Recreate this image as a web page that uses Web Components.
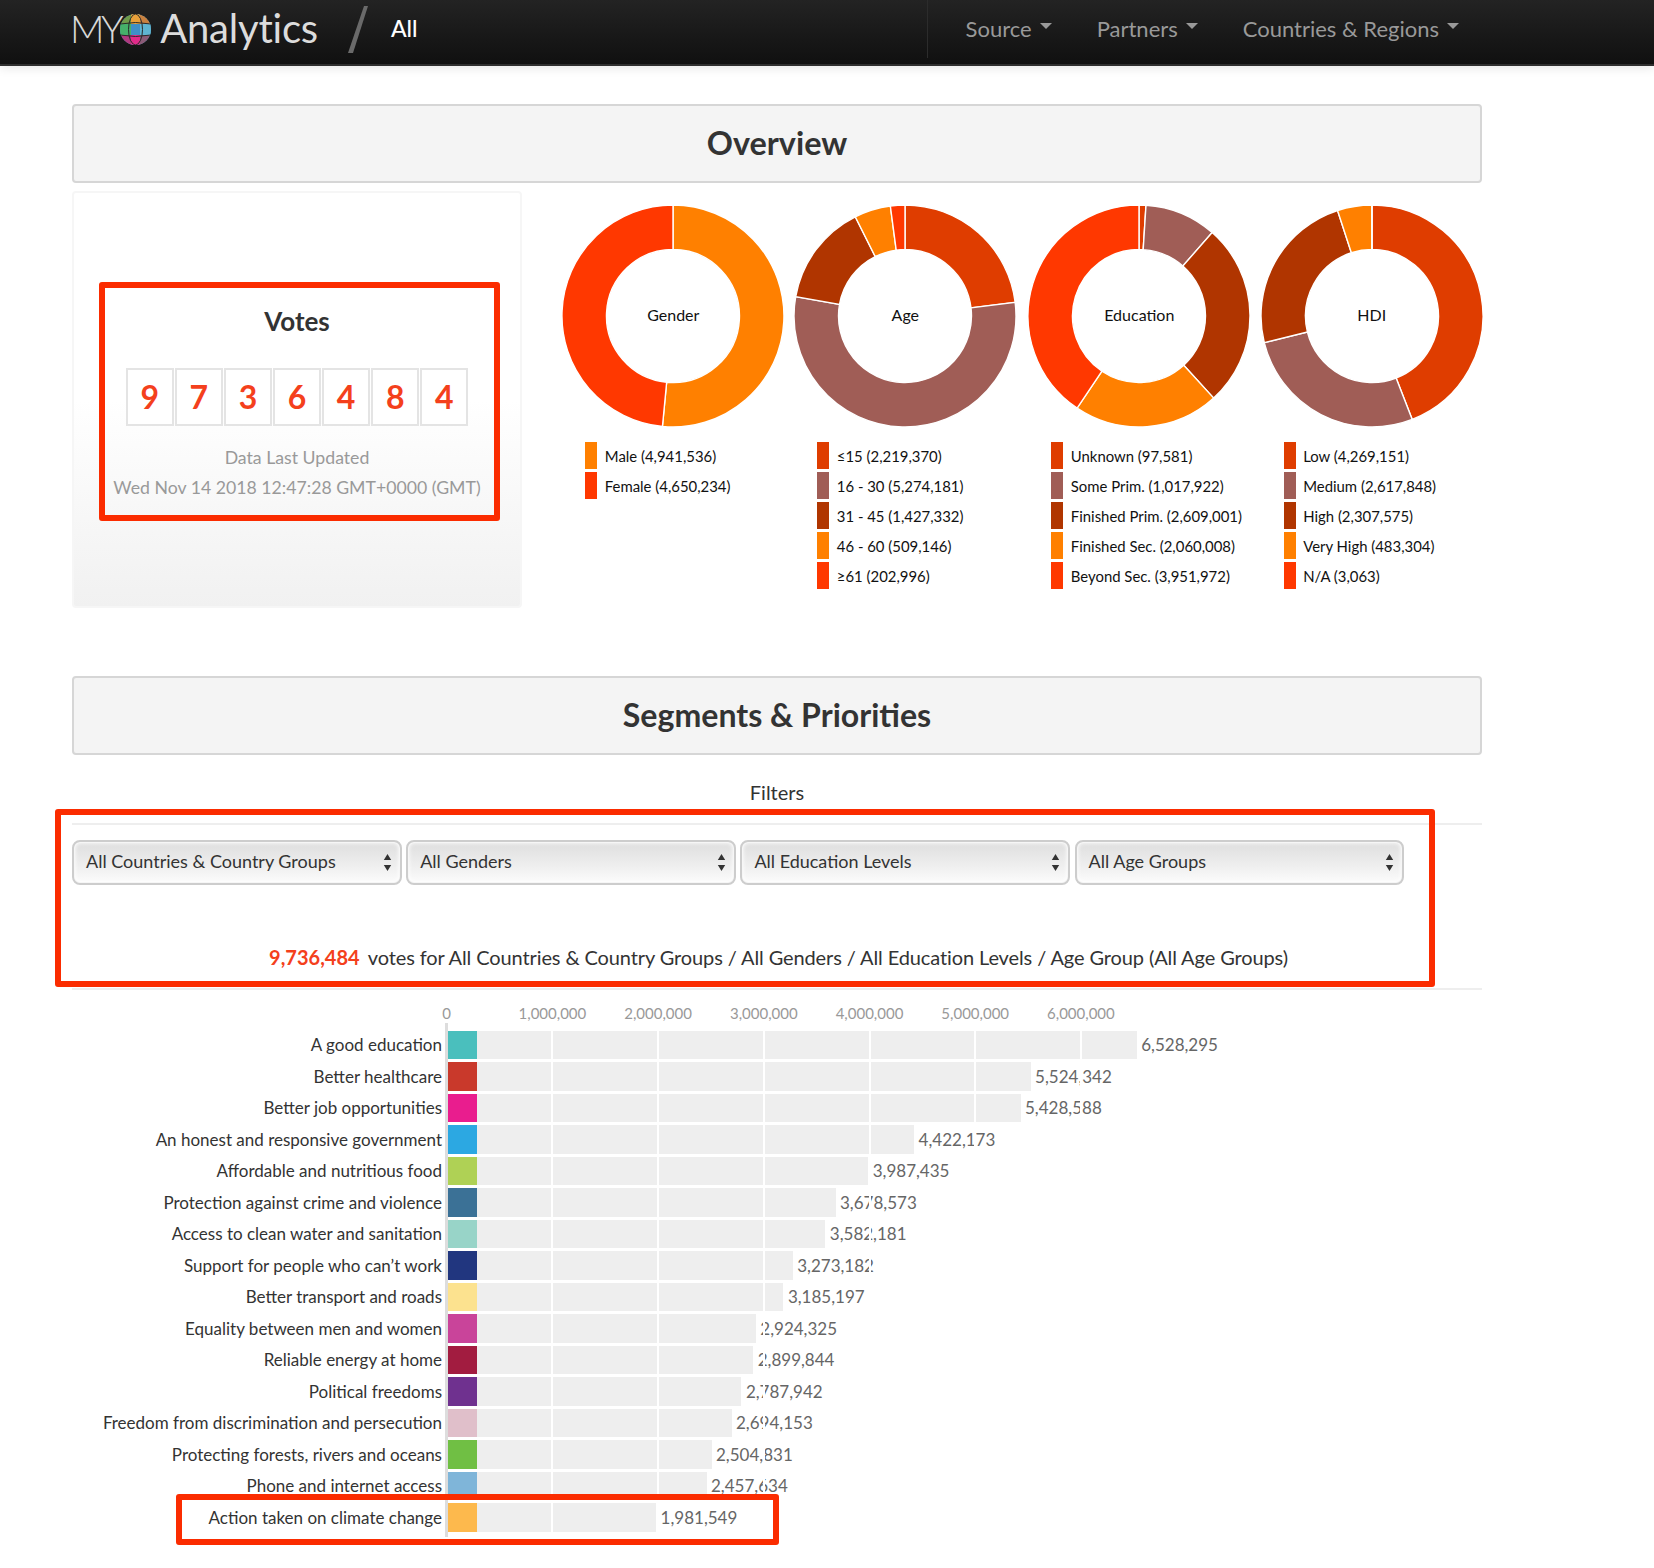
<!DOCTYPE html>
<html>
<head>
<meta charset="utf-8">
<title>MY World Analytics</title>
<style>
  html, body { margin: 0; padding: 0; background: #fff; }
  body { font-family: 'Lato', 'Liberation Sans', sans-serif; color: #333; }
  main { display: block; width: 1410px; margin-left: 72px; padding: 38px 0 30px; }
</style>
</head>
<body>
<top-nav title-text="All">
  <nav-item>Source</nav-item>
  <nav-item>Partners</nav-item>
  <nav-item>Countries &amp; Regions</nav-item>
</top-nav>
<main>
  <section-heading>Overview</section-heading>
  <overview-row>
    <votes-card digits="9736484" updated="Wed Nov 14 2018 12:47:28 GMT+0000 (GMT)">
      <red-frame style="left:25px;top:89px;width:401px;height:239px"></red-frame>
    </votes-card>
    <donut-chart label="Gender" values="4941536,4650234" colors="#ff8000,#ff3800">
      <legend-item color="#ff8000">Male (4,941,536)</legend-item>
      <legend-item color="#ff3800">Female (4,650,234)</legend-item>
    </donut-chart>
    <donut-chart label="Age" values="2219370,5274181,1427332,509146,202996">
      <legend-item color="#df3d00">≤15 (2,219,370)</legend-item>
      <legend-item color="#a05d56">16 - 30 (5,274,181)</legend-item>
      <legend-item color="#b03500">31 - 45 (1,427,332)</legend-item>
      <legend-item color="#ff8000">46 - 60 (509,146)</legend-item>
      <legend-item color="#ff3800">≥61 (202,996)</legend-item>
    </donut-chart>
    <donut-chart label="Education" values="97581,1017922,2609001,2060008,3951972">
      <legend-item color="#df3d00">Unknown (97,581)</legend-item>
      <legend-item color="#a05d56">Some Prim. (1,017,922)</legend-item>
      <legend-item color="#b03500">Finished Prim. (2,609,001)</legend-item>
      <legend-item color="#ff8000">Finished Sec. (2,060,008)</legend-item>
      <legend-item color="#ff3800">Beyond Sec. (3,951,972)</legend-item>
    </donut-chart>
    <donut-chart label="HDI" values="4269151,2617848,2307575,483304,3063">
      <legend-item color="#df3d00">Low (4,269,151)</legend-item>
      <legend-item color="#a05d56">Medium (2,617,848)</legend-item>
      <legend-item color="#b03500">High (2,307,575)</legend-item>
      <legend-item color="#ff8000">Very High (483,304)</legend-item>
      <legend-item color="#ff3800">N/A (3,063)</legend-item>
    </donut-chart>
  </overview-row>
  <section-heading style="margin-top:68px;font-size:32.1px">Segments &amp; Priorities</section-heading>
  <filter-panel total="9,736,484" summary="votes for All Countries &amp; Country Groups / All Genders / All Education Levels / Age Group (All Age Groups)">
    <filter-select>All Countries &amp; Country Groups</filter-select>
    <filter-select>All Genders</filter-select>
    <filter-select>All Education Levels</filter-select>
    <filter-select>All Age Groups</filter-select>
    <red-frame slot="frame" style="left:-17px;top:54px;width:1380px;height:178px"></red-frame>
  </filter-panel>
  <priority-chart>
    <priority-row value="6528295" color="#4abfbd">A good education</priority-row>
    <priority-row value="5524342" color="#c9392b">Better healthcare</priority-row>
    <priority-row value="5428588" color="#e91d8e">Better job opportunities</priority-row>
    <priority-row value="4422173" color="#2ca8e2">An honest and responsive government</priority-row>
    <priority-row value="3987435" color="#afd155">Affordable and nutritious food</priority-row>
    <priority-row value="3678573" color="#3b7196">Protection against crime and violence</priority-row>
    <priority-row value="3582181" color="#98d4c8">Access to clean water and sanitation</priority-row>
    <priority-row value="3273182" color="#21367f">Support for people who can’t work</priority-row>
    <priority-row value="3185197" color="#fce28f">Better transport and roads</priority-row>
    <priority-row value="2924325" color="#c9449a">Equality between men and women</priority-row>
    <priority-row value="2899844" color="#a21c40">Reliable energy at home</priority-row>
    <priority-row value="2787942" color="#6f318f">Political freedoms</priority-row>
    <priority-row value="2694153" color="#e0bfca">Freedom from discrimination and persecution</priority-row>
    <priority-row value="2504831" color="#70bf44">Protecting forests, rivers and oceans</priority-row>
    <priority-row value="2457634" color="#7fb5d9">Phone and internet access</priority-row>
    <priority-row value="1981549" color="#fdb94d">Action taken on climate change</priority-row>
    <red-frame slot="frame" style="left:104px;top:490px;width:603px;height:51px"></red-frame>
  </priority-chart>
</main>

<script>
const PX_PER_VOTE = 105.7 / 1000000;

class TopNav extends HTMLElement {
  constructor() {
    super();
    this.attachShadow({ mode: 'open' });
    this.shadowRoot.innerHTML = `
      <style>
        :host { display: flex; align-items: center; height: 64px; box-sizing: content-box;
          padding-left: 71px; color: #fff;
          background: linear-gradient(#232323, #101010); border-bottom: 2px solid #2e2e2e;
          box-shadow: 0 2px 10px rgba(0,0,0,.1); position: relative; }
        .my { font-size: 38px; font-weight: 300; color: #d8d8d8; letter-spacing: -3.5px; margin: -8px 0 0 -1px; }
        svg.globe { width: 31px; height: 31px; margin: -6px 9px 0 0; flex: none; }
        .brand { font-size: 40px; font-weight: 400; color: #dcdcdc; letter-spacing: -.2px; margin-top: -8px; }
        svg.slash { width: 20px; height: 48px; margin: -5px 22px 0 30px; flex: none; }
        .all { font-size: 23px; font-weight: 500; color: #fff; margin: -9px 0 0 1px; }
        .links { margin-left: auto; height: 58px; align-self: flex-start; display: flex; align-items: center;
          gap: 45px; padding: 0 195px 0 38px; border-left: 1px solid #2c2c2c; }
      </style>
      <span class="my">MY</span>
      <svg class="globe" viewBox="0 0 31 31">
        <defs><clipPath id="ball"><circle cx="15.5" cy="15.5" r="15.5"/></clipPath></defs>
        <g clip-path="url(#ball)">
          <rect width="31" height="31" fill="#4f9fc4"/>
          <rect x="0" y="0" width="11" height="10" fill="#6f9a4a"/>
          <rect x="11" y="0" width="9" height="10" fill="#e8a03a"/>
          <rect x="20" y="0" width="11" height="10" fill="#c9813f"/>
          <rect x="0" y="10" width="11" height="11" fill="#46b06a"/>
          <rect x="11" y="10" width="9" height="11" fill="#3f8fc8"/>
          <rect x="20" y="10" width="11" height="11" fill="#5fb4d0"/>
          <rect x="0" y="21" width="11" height="10" fill="#b0397f"/>
          <rect x="11" y="21" width="9" height="10" fill="#e22a8a"/>
          <rect x="20" y="21" width="11" height="10" fill="#8b5a76"/>
          <g fill="none" stroke="#2a2a2a" stroke-width="1">
            <ellipse cx="15.5" cy="15.5" rx="7" ry="15.5"/>
            <path d="M0 10 Q15.5 7 31 10M0 21 Q15.5 24 31 21"/>
          </g>
        </g>
      </svg>
      <span class="brand">Analytics</span>
      <svg class="slash" viewBox="0 0 20 48"><path d="M16 0 L20 0 L5 47 L0 47 Z" fill="#6a6a6a"/></svg>
      <span class="all"></span>
      <div class="links"><slot></slot></div>`;
    this.shadowRoot.querySelector('.all').textContent = this.getAttribute('title-text');
  }
}

class NavItem extends HTMLElement {
  constructor() {
    super();
    this.attachShadow({ mode: 'open' });
    this.shadowRoot.innerHTML = `
      <style>
        :host { display: inline-flex; align-items: center; font-size: 22px; color: #999; white-space: nowrap; padding-bottom: 2px; }
        i { display: block; width: 0; height: 0; margin: 0 0 4px 8px; border: 6px solid transparent;
          border-top-color: #999; border-bottom: 0; }
      </style><slot></slot><i></i>`;
  }
}

class SectionHeading extends HTMLElement {
  constructor() {
    super();
    this.attachShadow({ mode: 'open' });
    this.shadowRoot.innerHTML = `
      <style>
        :host { display: flex; align-items: center; justify-content: center; height: 79px; box-sizing: border-box;
          background: #f4f4f4; border: 2px solid #d6d6d6; border-radius: 4px; padding-bottom: 2px;
          font-size: 32.4px; font-weight: 700; color: #333; }
      </style><slot></slot>`;
  }
}

class OverviewRow extends HTMLElement {
  constructor() {
    super();
    this.attachShadow({ mode: 'open' });
    this.shadowRoot.innerHTML = `
      <style>
        :host { display: grid; grid-template-columns: 485.3px 232px 234px 232.4px 232px; margin-top: 8px; height: 417px; }
        ::slotted(votes-card) { width: 450px; }
        ::slotted(donut-chart) { width: 232px; }
      </style><slot></slot>`;
  }
}

class VotesCard extends HTMLElement {
  constructor() {
    super();
    this.attachShadow({ mode: 'open' });
    this.shadowRoot.innerHTML = `
      <style>
        :host { display: block; position: relative; box-sizing: border-box; height: 417px; padding-top: 110px;
          border: 2px solid #f6f6f6; border-radius: 4px; text-align: center;
          background: linear-gradient(#fff 50%, #f1f1f1); }
        h3 { margin: 0; font-size: 26px; line-height: 36px; font-weight: 700; color: #333; }
        .digits { display: flex; justify-content: center; gap: 1.1px; margin: 29px 0 17px; }
        .digits span { width: 48px; height: 58px; box-sizing: border-box; border: 2px solid #e4e4e4; background: #fff;
          font-size: 32px; font-weight: 700; line-height: 54px; color: #f4401c; }
        p { margin: 0; font-size: 17.7px; line-height: 29.5px; color: #999; white-space: nowrap; }
      </style>
      <h3>Votes</h3>
      <div class="digits"></div>
      <p>Data Last Updated</p>
      <p class="when"></p>
      <slot></slot>`;
    const box = this.shadowRoot.querySelector('.digits');
    for (const d of this.getAttribute('digits')) {
      const s = document.createElement('span');
      s.textContent = d;
      box.appendChild(s);
    }
    this.shadowRoot.querySelector('.when').textContent = this.getAttribute('updated');
  }
}

class DonutChart extends HTMLElement {
  constructor() {
    super();
    this.attachShadow({ mode: 'open' });
    const palette = ['#df3d00', '#a05d56', '#b03500', '#ff8000', '#ff3800'];
    const colors = (this.getAttribute('colors') || palette.join(',')).split(',');
    const values = this.getAttribute('values').split(',').map(Number);
    const total = values.reduce((a, b) => a + b, 0);
    const R = 111, r = 66.5, c = 112;
    let angle = 0, paths = '';
    const pt = (rad, a) => (c + rad * Math.sin(a)).toFixed(2) + ' ' + (c - rad * Math.cos(a)).toFixed(2);
    values.forEach((v, i) => {
      const next = angle + v / total * Math.PI * 2;
      const big = next - angle > Math.PI ? 1 : 0;
      paths += `<path fill="${colors[i]}" stroke="#fff" stroke-width="1.4" d="M${pt(R, angle)} A${R} ${R} 0 ${big} 1 ${pt(R, next)} L${pt(r, next)} A${r} ${r} 0 ${big} 0 ${pt(r, angle)} Z"/>`;
      angle = next;
    });
    this.shadowRoot.innerHTML = `
      <style>
        :host { display: block; padding-top: 13px; }
        .ring { position: relative; width: 224px; height: 224px; margin: 0 auto; }
        svg { display: block; width: 224px; height: 224px; }
        .name { position: absolute; inset: 0; display: flex; align-items: center; justify-content: center;
          font-size: 16px; color: #111; padding-bottom: 3px; box-sizing: border-box; }
        .legend { display: flex; flex-direction: column; gap: 3px; margin: 14px 0 0 28px; }
      </style>
      <div class="ring">
        <svg viewBox="0 0 224 224">${paths}</svg>
        <div class="name">${this.getAttribute('label')}</div>
      </div>
      <div class="legend"><slot></slot></div>`;
  }
}

class LegendItem extends HTMLElement {
  constructor() {
    super();
    this.attachShadow({ mode: 'open' });
    this.shadowRoot.innerHTML = `
      <style>
        :host { display: flex; align-items: center; gap: 7.5px; height: 27px; font-size: 14.9px; color: #111; white-space: nowrap; }
        i { display: block; width: 12px; height: 27px; background: ${this.getAttribute('color')}; flex: none; }
      </style><i></i><span><slot></slot></span>`;
  }
}

class FilterPanel extends HTMLElement {
  constructor() {
    super();
    this.attachShadow({ mode: 'open' });
    this.shadowRoot.innerHTML = `
      <style>
        :host { display: block; position: relative; padding-top: 23px; }
        .label { text-align: center; font-size: 20px; line-height: 28px; color: #333; }
        hr { border: 0; height: 2px; background: #eee; margin: 0; }
        .selects { display: flex; gap: 4.6px; margin: 15px 0 57px; }
        .summary { text-align: center; font-size: 20px; line-height: 30px; color: #333; white-space: nowrap; padding-left: 3px; }
        .summary b { color: #f4401c; margin-right: 3px; }
        .summary span { letter-spacing: -.11px; }
      </style>
      <div class="label">Filters</div>
      <hr style="margin-top:17px">
      <div class="selects"><slot></slot></div>
      <div class="summary"><b></b> <span></span></div>
      <hr style="margin-top:16px">
      <slot name="frame"></slot>`;
    this.shadowRoot.querySelector('b').textContent = this.getAttribute('total');
    this.shadowRoot.querySelector('.summary span').textContent = this.getAttribute('summary');
  }
}

class FilterSelect extends HTMLElement {
  constructor() {
    super();
    this.attachShadow({ mode: 'open' });
    this.shadowRoot.innerHTML = `
      <style>
        :host { display: flex; align-items: center; justify-content: space-between; width: 329.6px; height: 45px;
          box-sizing: border-box; padding: 0 8px 0 12px; border: 2px solid #cdcdcd; border-radius: 8px;
          background: linear-gradient(#dedede, #efefef 60%, #fcfcfc);
          box-shadow: inset 0 0 0 1px #f6f6f6, inset 0 0 4px 1px #fff; font-size: 18px; color: #333; white-space: nowrap; }
        span { padding-bottom: 4px; }
        svg { width: 9px; height: 17px; flex: none; }
      </style>
      <span><slot></slot></span>
      <svg viewBox="0 0 9 17"><path d="M4.5 0 L8.2 6 L.8 6 Z M.8 11 L8.2 11 L4.5 17 Z" fill="#333"/></svg>`;
  }
}

class PriorityChart extends HTMLElement {
  constructor() {
    super();
    this.attachShadow({ mode: 'open' });
    const x0 = 374.7;
    let ticks = '', lines = '';
    for (let i = 0; i <= 6; i++) {
      const x = x0 + i * 105.7;
      ticks += `<span style="left:${x}px">${(i * 1000000).toLocaleString('en-US')}</span>`;
      if (i) lines += `<i style="left:${x - 1}px"></i>`;
    }
    this.shadowRoot.innerHTML = `
      <style>
        :host { display: block; position: relative; margin-top: 14px; }
        .ticks { position: relative; height: 19px; font-size: 15px; line-height: 18px; color: #999; }
        .ticks span { position: absolute; top: 0; transform: translateX(-50%); white-space: nowrap; }
        .body { position: relative; padding: 7.7px 0 5.3px; }
        .body .rows { display: flex; flex-direction: column; gap: 3px; }
        .axis { position: absolute; top: 0; bottom: 0; left: ${x0 - 1.4}px; width: 2.6px; background: #ddd; }
        .grid i { position: absolute; top: 0; bottom: 0; width: 2px; background: #fff; z-index: 2; }
      </style>
      <div class="ticks">${ticks}</div>
      <div class="body">
        <div class="axis"></div>
        <div class="rows"><slot></slot></div>
        <div class="grid">${lines}</div>
      </div>
      <slot name="frame"></slot>`;
  }
}

class PriorityRow extends HTMLElement {
  constructor() {
    super();
    this.attachShadow({ mode: 'open' });
    const value = Number(this.getAttribute('value'));
    this.shadowRoot.innerHTML = `
      <style>
        :host { display: flex; align-items: center; height: 28.5px; font-size: 17px; white-space: nowrap; }
        .label { width: 370px; text-align: right; color: #333; flex: none; }
        .bar { margin-left: 6px; height: 100%; background: #eee; flex: none; width: ${(value * PX_PER_VOTE - 1.3).toFixed(1)}px; }
        .bar i { display: block; width: 29px; height: 100%; background: ${this.getAttribute('color')}; }
        .value { margin-left: 4.5px; color: #666; }
      </style>
      <div class="label"><slot></slot></div>
      <div class="bar"><i></i></div>
      <div class="value">${value.toLocaleString('en-US')}</div>`;
  }
}

// annotation box drawn over the screenshot, placed with inline left/top/width/height
class RedFrame extends HTMLElement {
  constructor() {
    super();
    this.attachShadow({ mode: 'open' });
    this.shadowRoot.innerHTML = `
      <style>
        :host { display: block; position: absolute; box-sizing: border-box; border: 6px solid #fb2c00;
          border-radius: 3px; z-index: 5; pointer-events: none; }
      </style>`;
  }
}

customElements.define('top-nav', TopNav);
customElements.define('nav-item', NavItem);
customElements.define('section-heading', SectionHeading);
customElements.define('overview-row', OverviewRow);
customElements.define('votes-card', VotesCard);
customElements.define('donut-chart', DonutChart);
customElements.define('legend-item', LegendItem);
customElements.define('filter-panel', FilterPanel);
customElements.define('filter-select', FilterSelect);
customElements.define('priority-chart', PriorityChart);
customElements.define('priority-row', PriorityRow);
customElements.define('red-frame', RedFrame);
</script>
</body>
</html>
